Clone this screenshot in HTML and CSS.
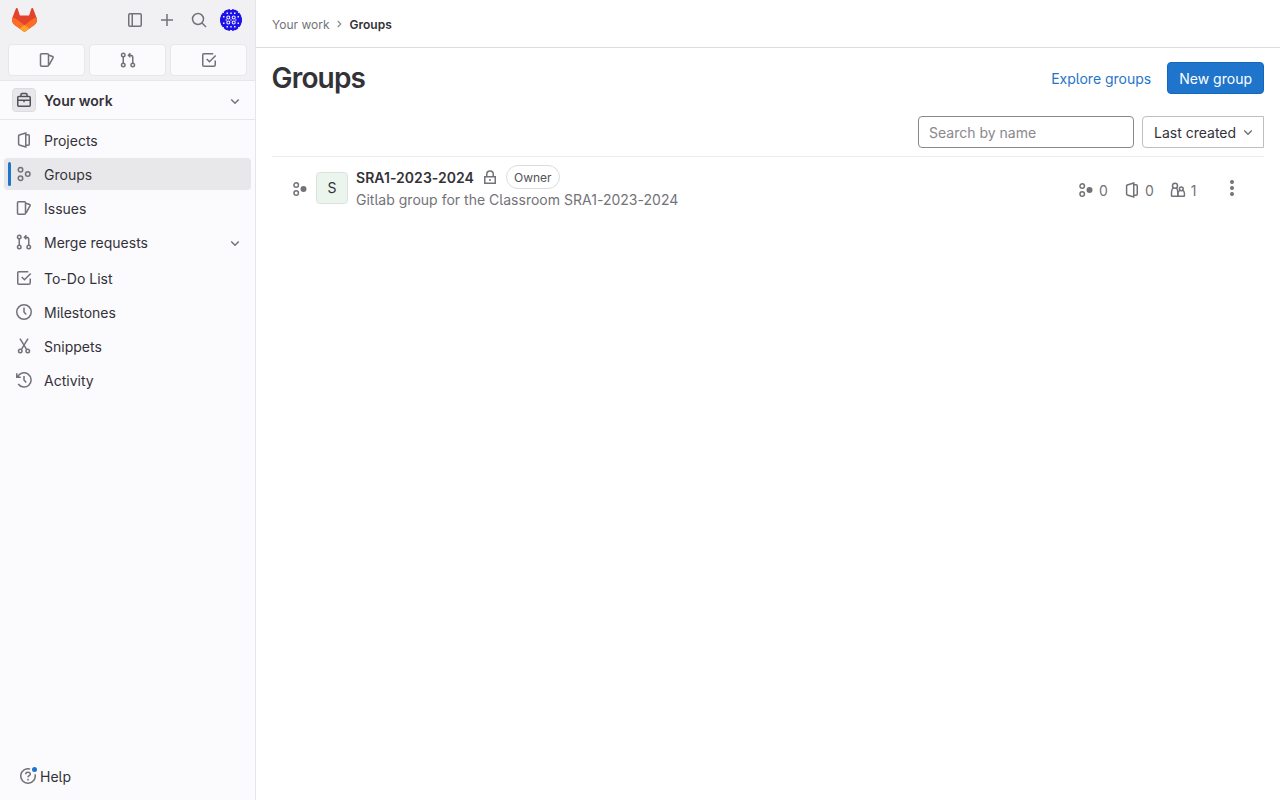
FILE: index.html
```html
<!DOCTYPE html>
<html lang="en">
<head>
<meta charset="utf-8">
<title>Groups</title>
<link rel="stylesheet" href="styles.css">
</head>
<body>
<svg class="sprite" aria-hidden="true">
  <symbol id="issues" viewBox="0 0 16 16"><path d="M2.5 1.75h6a1 1 0 0 1 1 1v10.5a1 1 0 0 1-1 1h-6a1 1 0 0 1-1-1V2.75a1 1 0 0 1 1-1zM10 3.2l3.6 1.3a.9.9 0 0 1 .5 1.2L10 13.2"/></symbol>
  <symbol id="merge" viewBox="0 0 16 16"><circle cx="3.25" cy="3" r="1.75"/><circle cx="3.25" cy="13" r="1.75"/><circle cx="12.75" cy="13" r="1.75"/><path d="M3.25 4.75v6.5M12.75 11.25V5.5a2.25 2.25 0 0 0-2.25-2.25H8.7M10.4 1.2 8.4 3.25l2 2"/></symbol>
  <symbol id="todo" viewBox="0 0 16 16"><path d="M14.25 8.5v4.25a1.5 1.5 0 0 1-1.5 1.5h-10a1 1 0 0 1-1-1V2.75a1 1 0 0 1 1-1h9.5M5.7 7l2.8 2.8 6.2-6.3"/></symbol>
  <symbol id="project" viewBox="0 0 16 16"><path d="M9.75 1 3.3 3a1 1 0 0 0-.7 1v8a1 1 0 0 0 .7 1l6.45 2zM9.75 2.75h2.5a1 1 0 0 1 1 1v8.5a1 1 0 0 1-1 1h-2.5"/></symbol>
  <symbol id="group" viewBox="0 0 16 16"><circle cx="4.5" cy="3.75" r="2.25"/><circle cx="4.5" cy="12.25" r="2.25"/><circle cx="11.75" cy="8" r="2.25"/></symbol>
  <symbol id="subgroup" viewBox="0 0 16 16"><circle cx="4.2" cy="4" r="2.25"/><circle cx="4.2" cy="12" r="2.25"/><circle class="solid" cx="11.5" cy="8" r="3"/></symbol>
  <symbol id="clock" viewBox="0 0 16 16"><circle cx="8" cy="8" r="7.25"/><path d="M8 3.5V8l2.2 2.4"/></symbol>
  <symbol id="snippet" viewBox="0 0 16 16"><circle cx="4.25" cy="13" r="1.75"/><circle cx="11.75" cy="13" r="1.75"/><path d="m4 .7 6.7 11M12 .7l-6.7 11"/></symbol>
  <symbol id="history" viewBox="0 0 16 16"><path d="M1.6 4.8A7.1 7.1 0 1 1 2.2 12M.75 1.2v4h4M8 4v4l2.2 2.4"/></symbol>
  <symbol id="chevron" viewBox="0 0 16 16"><path d="m4.25 6.5 3.75 3.75 3.75-3.75"/></symbol>
  <symbol id="chevron-right" viewBox="0 0 16 16"><path d="m5 4 4 4-4 4"/></symbol>
  <symbol id="panel" viewBox="0 0 16 16"><rect x="1.75" y="1.75" width="12.5" height="12.5" rx="1.2"/><path d="M5.25 1.75v12.5"/></symbol>
  <symbol id="plus" viewBox="0 0 16 16"><path d="M8 2v12M2 8h12"/></symbol>
  <symbol id="search" viewBox="0 0 16 16"><circle cx="7" cy="7" r="5.5"/><path d="m11 11 4 4"/></symbol>
  <symbol id="work" viewBox="0 0 16 16"><path d="M5 4.5v-2a1 1 0 0 1 1-1h4a1 1 0 0 1 1 1v2M2.75 4.5h10.5a1 1 0 0 1 1 1v7.75a1 1 0 0 1-1 1H2.75a1 1 0 0 1-1-1V5.5a1 1 0 0 1 1-1zM1.75 8.25h12.5M8 8.25v2"/></symbol>
  <symbol id="lock" viewBox="0 0 16 16"><path d="M2.75 6.75h10.5v6.5H2.75zM4.75 6.75V4.25a3.25 3.25 0 0 1 6.5 0v2.5M8 9v2"/></symbol>
  <symbol id="users" viewBox="0 0 16 16"><circle cx="5" cy="3.8" r="2.5"/><path d="M3.3 5.8C2 6.8 1.5 8.3 1.5 10.2v3.3a.75.75 0 0 0 .75.75h5.5V10c0-2-.5-3.3-1.4-4.2"/><circle cx="11.3" cy="6.8" r="1.9"/><path d="M9.9 8.3C8.5 9 7.9 10 7.9 11.5v2.75h5.8a.75.75 0 0 0 .75-.75v-2c0-1.5-.5-2.5-1.7-3.2"/></symbol>
  <symbol id="dots" viewBox="0 0 16 16"><g class="solid"><circle cx="8" cy="2" r="2"/><circle cx="8" cy="8" r="2"/><circle cx="8" cy="14" r="2"/></g></symbol>
  <symbol id="help" viewBox="0 0 16 16"><path d="M10.2 1.1a7.25 7.25 0 1 0 4.8 5.1M5.7 6.3C5.7 4.9 6.7 4.2 8 4.2s2.3.8 2.3 1.9c0 1.6-2.3 1.5-2.3 3.1M8 10.7v1.7"/></symbol>
</svg>

<div class="app">
  <aside class="sidebar">
    <div class="userbar">
      <div class="toolbar">
        <svg class="logo" viewBox="0 0 25 24"><path fill="#e24329" d="m24.5 9.5-3.4-9a.9.9 0 0 0-1.7.1L17.1 7.6H7.9L5.6.6A.9.9 0 0 0 3.9.5L.5 9.5a6.4 6.4 0 0 0 2.1 7.4L12.5 24l9.9-7.1a6.4 6.4 0 0 0 2.1-7.4z"/><path fill="#fc6d26" d="M24.5 9.5a11.5 11.5 0 0 0-4.6 2.1l-7.4 5.6L5.1 11.6A11.5 11.5 0 0 0 .5 9.5a6.4 6.4 0 0 0 2.1 7.4L12.5 24l9.9-7.1a6.4 6.4 0 0 0 2.1-7.4z"/><path fill="#fca326" d="m7.8 20.6 4.7 3.4 4.7-3.4-4.7-3.5z"/></svg>
        <svg class="icon"><use href="#panel"/></svg>
        <svg class="icon"><use href="#plus"/></svg>
        <svg class="icon"><use href="#search"/></svg>
        <svg class="avatar" viewBox="0 0 24 24">
          <defs><clipPath id="disc"><circle cx="12" cy="12" r="11"/></clipPath></defs>
          <circle cx="12" cy="12" r="11.5" fill="#f0edf8"/>
          <g clip-path="url(#disc)"><path fill="#1c12e8" d="M0 0h24v24H0z"/>
          <g fill="#f0edf8"><path d="M7.500 4.500H9V6H7.500zM11.250 4.500h1.500V6h-1.500zM15 4.500h1.500V6H15zM7.500 18H9v1.500H7.500zM11.250 18h1.500v1.500h-1.500zM15 18h1.500v1.500H15zM4 8h1.500v1.500H4zM4 14.500h1.500V16H4zM18.500 8H20v1.500h-1.500zM18.500 14.500H20V16h-1.500zM7 0h2v2H7zM11 0h2v2h-2zM15 0h2v2h-2zM7 22h2v2H7zM11 22h2v2h-2zM15 22h2v2h-2zM0 7h2v2H0zM0 15h2v2H0zM22 7h2v2h-2zM22 15h2v2h-2zM3.500 3.500H5V5H3.500zM19 3.500h1.500V5H19zM3.500 19H5v1.500H3.500zM19 19h1.500v1.500H19z"/></g>
          <g fill="none" stroke="#f0edf8" stroke-width="1.1"><circle cx="9.300" cy="9.500" r="1.500"/><circle cx="14.700" cy="9.500" r="1.500"/><circle cx="9.300" cy="14.500" r="1.500"/><circle cx="14.700" cy="14.500" r="1.500"/><path d="M6.500 12h1.500M11.300 12h1.400M16 12h1.500"/></g></g>
        </svg>
      </div>
      <div class="shortcuts">
        <a class="shortcut"><svg class="icon"><use href="#issues"/></svg></a>
        <a class="shortcut"><svg class="icon"><use href="#merge"/></svg></a>
        <a class="shortcut"><svg class="icon"><use href="#todo"/></svg></a>
      </div>
    </div>
    <div class="context">
      <span class="context-icon"><svg class="icon"><use href="#work"/></svg></span>
      <span class="label">Your work</span>
      <svg class="icon"><use href="#chevron"/></svg>
    </div>
    <nav class="menu">
      <a class="item"><svg class="icon"><use href="#project"/></svg><span class="label">Projects</span></a>
      <a class="item active"><svg class="icon"><use href="#group"/></svg><span class="label">Groups</span></a>
      <a class="item"><svg class="icon"><use href="#issues"/></svg><span class="label">Issues</span></a>
      <a class="item expandable"><svg class="icon"><use href="#merge"/></svg><span class="label">Merge requests</span><svg class="icon"><use href="#chevron"/></svg></a>
      <a class="item"><svg class="icon"><use href="#todo"/></svg><span class="label">To-Do List</span></a>
      <a class="item"><svg class="icon"><use href="#clock"/></svg><span class="label">Milestones</span></a>
      <a class="item"><svg class="icon"><use href="#snippet"/></svg><span class="label">Snippets</span></a>
      <a class="item"><svg class="icon"><use href="#history"/></svg><span class="label">Activity</span></a>
    </nav>
    <div class="help"><span class="help-icon"><svg class="icon"><use href="#help"/></svg><span class="help-dot"></span></span><span class="label">Help</span></div>
  </aside>
  <div class="page">
    <header class="breadcrumbs"><span>Your work</span><svg class="icon crumb-sep"><use href="#chevron-right"/></svg><strong>Groups</strong></header>
    <main class="content">
      <div class="title-row">
        <h1>Groups</h1>
        <a class="explore">Explore groups</a>
        <button class="new-group">New group</button>
      </div>
      <div class="filters">
        <input class="search" type="text" placeholder="Search by name">
        <button class="sort"><span>Last created</span><svg class="icon"><use href="#chevron"/></svg></button>
      </div>
      <div class="group-row">
        <svg class="icon row-icon"><use href="#subgroup"/></svg>
        <div class="group-avatar">S</div>
        <div class="group-info">
          <div class="group-title"><strong>SRA1-2023-2024</strong><svg class="icon"><use href="#lock"/></svg><span class="badge">Owner</span></div>
          <div class="description">Gitlab group for the Classroom SRA1-2023-2024</div>
        </div>
        <div class="stats">
          <span class="stat"><svg class="icon"><use href="#subgroup"/></svg>0</span>
          <span class="stat"><svg class="icon"><use href="#project"/></svg>0</span>
          <span class="stat"><svg class="icon"><use href="#users"/></svg>1</span>
        </div>
        <svg class="icon more"><use href="#dots"/></svg>
      </div>
    </main>
  </div>
</div>
</body>
</html>
```
FILE: styles.css
```css
* { box-sizing: border-box; }
body {
  margin: 0;
  font: 14px/20px Inter, "Noto Sans", sans-serif;
  font-feature-settings: "cv05";
  color: #333238;
  background: #fff;
}
button, input { font: inherit; font-feature-settings: inherit; color: inherit; margin: 0; }
.sprite { display: none; }
.icon {
  width: 16px;
  height: 16px;
  flex: none;
  fill: none;
  stroke: #737278;
  stroke-width: 1.5;
}
.solid { fill: #737278; stroke: none; }
.app { display: flex; height: 100vh; }

.sidebar {
  width: 256px;
  flex: none;
  display: flex;
  flex-direction: column;
  background: #fbfafd;
  border-right: 1px solid #e6e6ea;
}
.userbar { height: 81px; background: #f1f1f4; border-bottom: 1px solid #e7e7ea; }
.toolbar { height: 40px; display: flex; align-items: center; gap: 16px; padding: 0 12px; }
.logo { width: 25px; height: 24px; margin-right: auto; }
.avatar { width: 24px; height: 24px; margin-left: -4px; }
.shortcuts { display: flex; gap: 4px; padding: 4px 8px 0; }
.shortcut {
  flex: 1;
  height: 32px;
  display: flex;
  align-items: center;
  justify-content: center;
  background: #fbfafd;
  border: 1px solid #e7e7ea;
  border-radius: 4px;
}
.context {
  height: 39px;
  display: flex;
  align-items: center;
  gap: 8px;
  padding: 0 12px;
  font-weight: 600;
  border-bottom: 1px solid #e7e7ea;
}
.context .icon { margin-top: 1px; }
.context-icon {
  width: 24px;
  height: 24px;
  display: grid;
  place-items: center;
  background: #e8e7ea;
  border: 1px solid #dcdce0;
  border-radius: 4px;
}
.context-icon .icon { stroke: #535158; margin: 0; }
.label { flex: 1; padding-top: 2px; }
.menu { padding: 4px; display: flex; flex-direction: column; gap: 2px; flex: 1; }
.item {
  height: 32px;
  display: flex;
  align-items: center;
  gap: 12px;
  padding: 0 8px 0 12px;
  border-radius: 4px;
}
.item .label + .icon { margin-top: 2px; }
.expandable { margin-bottom: 2px; }
.active { background: #e8e8ea; padding-left: 4px; gap: 12px; }
.active::before { content: ""; width: 3px; height: 24px; border-radius: 3px; background: #1f75cb; margin-right: -7px; }
.help { height: 48px; display: flex; align-items: center; gap: 4px; padding-left: 20px; }
.help-icon { position: relative; height: 16px; }
.help-icon .icon { display: block; }
.help-dot { position: absolute; top: -1px; right: -1px; width: 5px; height: 5px; border-radius: 50%; background: #1f75cb; }

.page { flex: 1; }
.breadcrumbs {
  height: 48px;
  display: flex;
  align-items: center;
  gap: 4px;
  padding: 2px 0 0 16px;
  font-size: 12px;
  color: #737278;
  border-bottom: 1px solid #dcdcde;
}
.breadcrumbs strong { font-weight: 600; color: #333238; }
.crumb-sep { width: 12px; height: 12px; margin-top: -1px; stroke: #89888d; }
.content { padding: 14px 16px; }
.title-row { display: flex; align-items: center; gap: 16px; height: 32px; }
h1 { font-size: 28px; line-height: 32px; font-weight: 600; letter-spacing: -.85px; margin: 0 auto 0 -.4px; }
.explore { color: #1f75cb; padding-top: 2px; }
.new-group {
  height: 32px;
  padding: 2px 11px 0;
  color: #fff;
  background: #1f75cb;
  border: 1px solid #1068bf;
  border-radius: 4px;
}
.filters { display: flex; justify-content: flex-end; gap: 8px; margin-top: 22px; padding-bottom: 8px; border-bottom: 1px solid #ececef; }
.search { width: 216px; height: 32px; padding: 1px 10px 0; border: 1px solid #89888d; border-radius: 4px; background: #fff; }
.search::placeholder { color: #89888d; }
.sort {
  width: 122px;
  height: 32px;
  display: flex;
  align-items: center;
  justify-content: space-between;
  padding: 0 7px 0 11px;
  background: #fff;
  border: 1px solid #bfbfc3;
  border-radius: 4px 0 0 4px;
}
.sort span { padding-top: 2px; }
.group-row { display: flex; align-items: center; height: 62px; padding: 0 24px 0 20px; }
.row-icon { margin-top: 2px; }
.group-avatar {
  width: 32px;
  height: 32px;
  margin: 0 8px;
  display: grid;
  place-items: center;
  background: #ecf4ee;
  border: 1px solid #dbe2dd;
  border-radius: 4px;
}
.group-info { flex: 1; }
.group-title { display: flex; align-items: center; gap: 8px; height: 24px; }
.group-title strong { font-weight: 600; letter-spacing: .04px; }
.badge { height: 24px; margin-top: -2px; padding: 0 7px; font-size: 12px; line-height: 23px; border: 1px solid #dcdcde; border-radius: 12px; color: #535158; }
.description { color: #737278; line-height: 20px; letter-spacing: .015px; }
.stats { display: flex; gap: 17px; margin-top: 5px; color: #737278; }
.stat { display: flex; align-items: center; gap: 4px; }
.stat .icon { margin: -1px .5px 0 -.5px; }
.stat:first-child .icon { margin-left: -1.5px; margin-right: 1px; }
.more { margin-left: 27.5px; }
```
